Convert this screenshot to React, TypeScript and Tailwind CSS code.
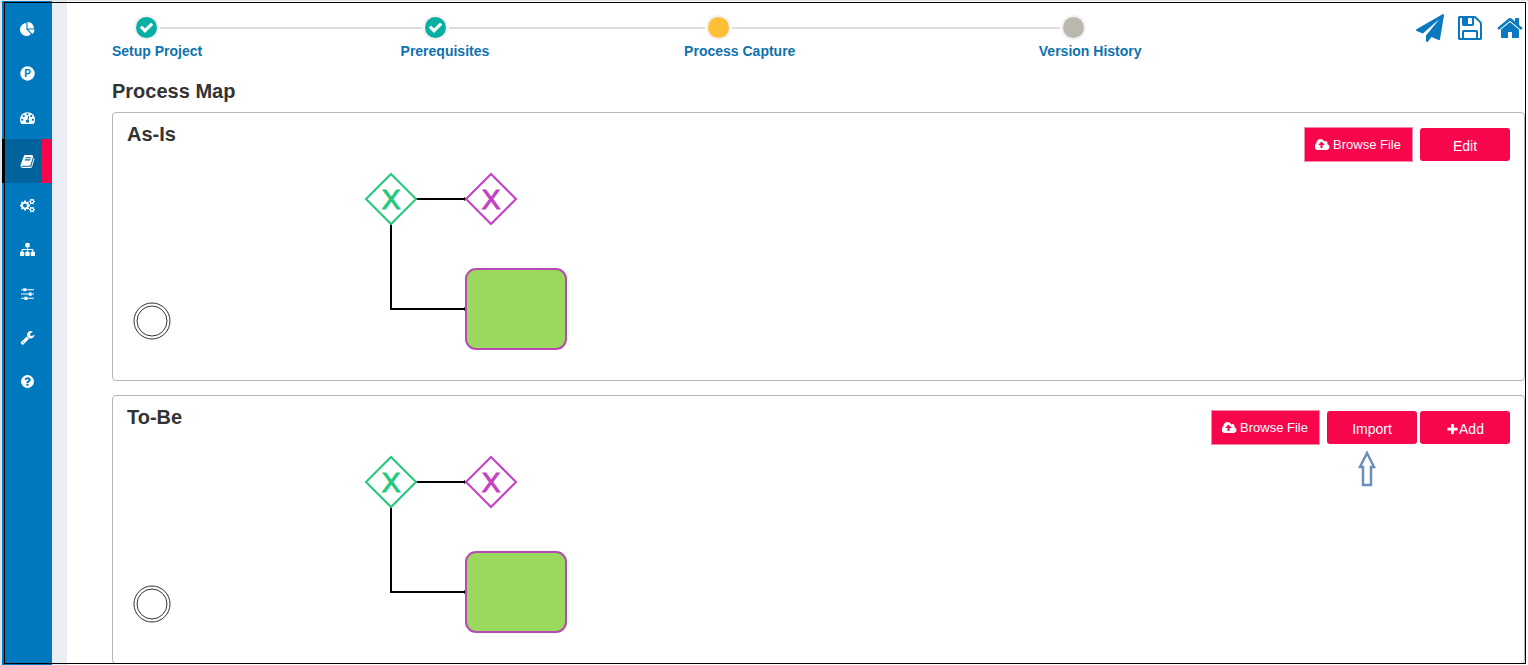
import { clsx } from "clsx";
import type { ReactNode } from "react";

const ICONS = {
  pie: "M768 890l546 546q-106 108-247.5 168t-298.5 60q-209 0-385.5-103t-279.5-279.5-103-385.5 103-385.5 279.5-279.5 385.5-103v762zm187 6h773q0 157-60 298.5t-168 247.5zm709-128h-768v-768q209 0 385.5 103t279.5 279.5 103 385.5z",
  gauge:
    "M384 1152q0-53-37.5-90.5t-90.5-37.5-90.5 37.5-37.5 90.5 37.5 90.5 90.5 37.5 90.5-37.5 37.5-90.5zm192-448q0-53-37.5-90.5t-90.5-37.5-90.5 37.5-37.5 90.5 37.5 90.5 90.5 37.5 90.5-37.5 37.5-90.5zm428 481l101-382q6-26-7.5-48.5t-38.5-29.5-48 6.5-30 39.5l-101 382q-60 5-107 43.5t-63 98.5q-20 77 20 146t117 89 146-20 89-117q16-60-6-117t-72-91zm660-33q0-53-37.5-90.5t-90.5-37.5-90.5 37.5-37.5 90.5 37.5 90.5 90.5 37.5 90.5-37.5 37.5-90.5zm-640-640q0-53-37.5-90.5t-90.5-37.5-90.5 37.5-37.5 90.5 37.5 90.5 90.5 37.5 90.5-37.5 37.5-90.5zm448 192q0-53-37.5-90.5t-90.5-37.5-90.5 37.5-37.5 90.5 37.5 90.5 90.5 37.5 90.5-37.5 37.5-90.5zm320 448q0 261-141 483-19 29-54 29h-1402q-35 0-54-29-141-221-141-483 0-182 71-348t191-286 286-191 348-71 348 71 286 191 191 286 71 348z",
  book: "M1703 478q40 57 18 129l-275 906q-19 64-76.5 107.5t-122.5 43.5h-923q-77 0-148.5-53.5t-99.5-131.5q-24-67-2-127 0-4 3-27t4-37q1-8-3-21.5t-3-19.5q2-11 8-21t16.5-23.5 16.5-23.5q23-38 45-91.5t30-91.5q3-10 .5-30t-.5-28q3-11 17-28t17-23q21-36 42-92t25-90q1-9-2.5-32t.5-28q4-13 22-30.5t22-22.5q19-26 42.5-84.5t27.5-96.5q1-8-3-25.5t-2-26.5q2-8 9-18t18-23 17-21q8-12 16.5-30.5t15-35 16-36 19.5-32 26.5-23.5 36-11.5 47.5 5.5l-1 3q38-9 51-9h761q74 0 114 56t18 130l-274 906q-36 119-71.5 153.5t-128.5 34.5h-869q-27 0-38 15-11 16-1 43 24 70 144 70h923q29 0 56-15.5t35-41.5l300-987q7-22 5-57 38 15 59 43zm-1064 2q-4 13 2 22.5t20 9.5h608q13 0 25.5-9.5t16.5-22.5l21-64q4-13-2-22.5t-20-9.5h-608q-13 0-25.5 9.5t-16.5 22.5zm-83 256q-4 13 2 22.5t20 9.5h608q13 0 25.5-9.5t16.5-22.5l21-64q4-13-2-22.5t-20-9.5h-608q-13 0-25.5 9.5t-16.5 22.5z",
  cogs: "M896 896q0-106-75-181t-181-75-181 75-75 181 75 181 181 75 181-75 75-181zm768 512q0-52-38-90t-90-38-90 38-38 90q0 53 37.5 90.5t90.5 37.5 90.5-37.5 37.5-90.5zm0-1024q0-52-38-90t-90-38-90 38-38 90q0 53 37.5 90.5t90.5 37.5 90.5-37.5 37.5-90.5zm-384 421v185q0 10-7 19.5t-16 10.5l-155 24q-11 35-32 76 34 48 90 115 7 11 7 20 0 12-7 19-23 30-82.5 89.5t-78.5 59.5q-11 0-21-7l-115-90q-37 19-77 31-11 108-23 155-7 24-30 24h-186q-11 0-20-7.5t-10-17.5l-23-153q-34-10-75-31l-118 89q-7 7-20 7-11 0-21-8-144-133-144-160 0-9 7-19 10-14 41-53t47-61q-23-44-35-82l-152-24q-10-1-17-9.5t-7-19.5v-185q0-10 7-19.5t16-10.5l155-24q11-35 32-76-34-48-90-115-7-11-7-20 0-12 7-20 22-30 82-89t79-59q11 0 21 7l115 90q34-18 77-32 11-108 23-154 7-24 30-24h186q11 0 20 7.5t10 17.5l23 153q34 10 75 31l118-89q8-7 20-7 11 0 21 8 144 133 144 160 0 8-7 19-12 16-42 54t-45 60q23 48 34 82l152 23q10 2 17 10.5t7 19.5zm640 533v140q0 16-149 31-12 27-30 52 51 113 51 138 0 4-4 7-122 71-124 71-8 0-46-47t-52-68q-20 2-30 2t-30-2q-14 21-52 68t-46 47q-2 0-124-71-4-3-4-7 0-25 51-138-18-25-30-52-149-15-149-31v-140q0-16 149-31 13-29 30-52-51-113-51-138 0-4 4-7 4-2 35-20t59-34 30-16q8 0 46 46.5t52 67.5q20-2 30-2t30 2q51-71 92-112l6-2q4 0 124 70 4 3 4 7 0 25-51 138 17 23 30 52 149 15 149 31zm0-1024v140q0 16-149 31-12 27-30 52 51 113 51 138 0 4-4 7-122 71-124 71-8 0-46-47t-52-68q-20 2-30 2t-30-2q-14 21-52 68t-46 47q-2 0-124-71-4-3-4-7 0-25 51-138-18-25-30-52-149-15-149-31v-140q0-16 149-31 13-29 30-52-51-113-51-138 0-4 4-7 4-2 35-20t59-34 30-16q8 0 46 46.5t52 67.5q20-2 30-2t30 2q51-71 92-112l6-2q4 0 124 70 4 3 4 7 0 25-51 138 17 23 30 52 149 15 149 31z",
  sitemap:
    "M1792 1248v320q0 40-28 68t-68 28h-320q-40 0-68-28t-28-68v-320q0-40 28-68t68-28h96v-192h-512v192h96q40 0 68 28t28 68v320q0 40-28 68t-68 28h-320q-40 0-68-28t-28-68v-320q0-40 28-68t68-28h96v-192h-512v192h96q40 0 68 28t28 68v320q0 40-28 68t-68 28h-320q-40 0-68-28t-28-68v-320q0-40 28-68t68-28h96v-192q0-52 38-90t90-38h512v-192h-96q-40 0-68-28t-28-68v-320q0-40 28-68t68-28h320q40 0 68 28t28 68v320q0 40-28 68t-68 28h-96v192h512q52 0 90 38t38 90v192h96q40 0 68 28t28 68z",
  sliders:
    "M480 1408v128h-352v-128h352zm352-128q26 0 45 19t19 45v256q0 26-19 45t-45 19h-256q-26 0-45-19t-19-45v-256q0-26 19-45t45-19h256zm160-384v128h-864v-128h864zm-640-512v128h-224v-128h224zm1312 1024v128h-736v-128h736zm-960-1152q26 0 45 19t19 45v256q0 26-19 45t-45 19h-256q-26 0-45-19t-19-45v-256q0-26 19-45t45-19h256zm640 512q26 0 45 19t19 45v256q0 26-19 45t-45 19h-256q-26 0-45-19t-19-45v-256q0-26 19-45t45-19h256zm320 128v128h-224v-128h224zm0-512v128h-864v-128h864z",
  wrench:
    "M448 1472q0-26-19-45t-45-19-45 19-19 45 19 45 45 19 45-19 19-45zm644-420l-682 682q-37 37-90 37-52 0-91-37l-106-108q-38-36-38-90 0-53 38-91l681-681q39 98 114.5 173.5t173.5 114.5zm634-435q0 39-23 106-47 134-164.5 217.5t-258.5 83.5q-185 0-316.5-131.5t-131.5-316.5 131.5-316.5 316.5-131.5q58 0 121.5 16.5t107.5 46.5q16 11 16 28t-16 28l-293 169v224l193 107q5-3 79-48.5t135.5-81 70.5-35.5q15 0 23.5 10t8.5 25z",
  help: "M1024 1376v-192q0-14-9-23t-23-9h-192q-14 0-23 9t-9 23v192q0 14 9 23t23 9h192q14 0 23-9t9-23zm256-672q0-88-55.5-163t-138.5-116-170-41q-243 0-371 213-15 24 8 42l132 100q7 6 19 6 16 0 25-12 53-68 86-92 34-24 86-24 48 0 85.5 26t37.5 59q0 38-20 61t-68 45q-63 28-115.5 86.5t-52.5 125.5v36q0 14 9 23t23 9h192q14 0 23-9t9-23q0-19 21.5-49.5t54.5-49.5q32-18 49-28.5t46-35 44.5-48 28-60.5 12.5-81zm384 192q0 209-103 385.5t-279.5 279.5-385.5 103-385.5-103-279.5-279.5-103-385.5 103-385.5 279.5-279.5 385.5-103 385.5 103 279.5 279.5 103 385.5z",
  plane:
    "M1764 11q33 24 27 64l-256 1536q-5 29-32 45-14 8-31 8-11 0-24-5l-453-185-242 295q-18 23-49 23-13 0-22-4-19-7-30.5-23.5t-11.5-36.5v-349l864-1059-1069 925-395-162q-37-14-40-55-2-40 32-59l1664-960q15-9 32-9 20 0 36 11z",
  save: "M512 1536h768v-384h-768v384zm896 0h128v-896q0-14-10-38.5t-20-34.5l-281-281q-10-10-34-20t-39-10v416q0 40-28 68t-68 28h-576q-40 0-68-28t-28-68v-416h-128v1280h128v-416q0-40 28-68t68-28h832q40 0 68 28t28 68v416zm-384-928v-320q0-13-9.5-22.5t-22.5-9.5h-192q-13 0-22.5 9.5t-9.5 22.5v320q0 13 9.5 22.5t22.5 9.5h192q13 0 22.5-9.5t9.5-22.5zm640 32v928q0 40-28 68t-68 28h-1344q-40 0-68-28t-28-68v-1344q0-40 28-68t68-28h928q40 0 88 20t76 48l280 280q28 28 48 76t20 88z",
  home: "M1472 992v480q0 26-19 45t-45 19h-384v-384h-256v384h-384q-26 0-45-19t-19-45v-480q0-1 .5-3t.5-3l575-474 575 474q1 2 1 6zm223-69l-62 74q-8 9-21 11h-3q-13 0-21-7l-692-577-692 577q-12 8-24 7-13-2-21-11l-62-74q-8-10-7-23.5t11-21.5l719-599q32-26 76-26t76 26l244 204v-195q0-14 9-23t23-9h192q14 0 23 9t9 23v408l219 182q10 8 11 21.5t-7 23.5z",
  check:
    "M1671 566q0 40-28 68l-724 724-136 136q-28 28-68 28t-68-28l-136-136-362-362q-28-28-28-68t28-68l136-136q28-28 68-28t68 28l294 295 656-657q28-28 68-28t68 28l136 136q28 28 28 68z",
  plus: "M1600 736v192q0 40-28 68t-68 28h-416v416q0 40-28 68t-68 28h-192q-40 0-68-28t-28-68v-416h-416q-40 0-68-28t-28-68v-192q0-40 28-68t68-28h416v-416q0-40 28-68t68-28h192q40 0 68 28t28 68v416h416q40 0 68 28t28 68z",
  upload:
    "M1216 864q0-14-9-23l-352-352q-9-9-23-9t-23 9l-351 351q-10 12-10 24 0 14 9 23t23 9h224v352q0 13 9.5 22.5t22.5 9.5h192q13 0 22.5-9.5t9.5-22.5v-352h224q13 0 22.5-9.5t9.5-22.5zm640 288q0 159-112.5 271.5t-271.5 112.5h-1088q-185 0-316.5-131.5t-131.5-316.5q0-130 70-240t188-165q-2-30-2-43 0-212 150-362t362-150q156 0 285.5 87t188.5 231q71-62 166-62 106 0 181 75t75 181q0 76-41 138 130 31 213.5 135.5t83.5 238.5z",
};

type IconName = keyof typeof ICONS;

function Icon({ name, className }: { name: IconName; className?: string }) {
  const wide = name === "upload" || name === "cogs";
  return (
    <svg
      viewBox={wide ? "0 0 1920 1792" : "0 0 1792 1792"}
      fill="currentColor"
      className={clsx("shrink-0", className)}
      aria-hidden="true"
    >
      <path d={ICONS[name]} />
    </svg>
  );
}

function ProjectIcon() {
  return (
    <svg viewBox="0 0 15 15" className="size-[15px] shrink-0" aria-hidden="true">
      <circle cx="7.5" cy="7.5" r="7.2" fill="#fff" />
      <text x="7.7" y="11" textAnchor="middle" fontSize="10" fontWeight="700" fill="#0078bd">
        P
      </text>
    </svg>
  );
}

const NAV: { label: string; icon: IconName | null; active?: boolean }[] = [
  { label: "Dashboard", icon: "pie" },
  { label: "Projects", icon: null },
  { label: "Performance", icon: "gauge" },
  { label: "Process library", icon: "book", active: true },
  { label: "Configuration", icon: "cogs" },
  { label: "Organisation", icon: "sitemap" },
  { label: "Parameters", icon: "sliders" },
  { label: "Tools", icon: "wrench" },
  { label: "Help", icon: "help" },
];

function Sidebar() {
  return (
    <nav className="w-[50px] shrink-0 bg-[#0078bd] pt-[6px]">
      <ul>
        {NAV.map((item) => (
          <li key={item.label}>
            <a
              href="#"
              aria-label={item.label}
              aria-current={item.active ? "page" : undefined}
              className={clsx(
                "relative flex h-11 items-center justify-center text-white",
                item.active && "bg-[#00639c]",
              )}
            >
              {item.active && (
                <>
                  <span className="absolute inset-y-0 left-0 w-[2px] bg-black" />
                  <span className="absolute inset-y-0 right-0 w-[10px] bg-[#f7064c]" />
                </>
              )}
              {item.icon ? <Icon name={item.icon} className="size-[15px]" /> : <ProjectIcon />}
            </a>
          </li>
        ))}
      </ul>
    </nav>
  );
}

type StepState = "done" | "current" | "pending";

const STEPS: { label: string; state: StepState }[] = [
  { label: "Setup Project", state: "done" },
  { label: "Prerequisites", state: "done" },
  { label: "Process Capture", state: "current" },
  { label: "Version History", state: "pending" },
];

function Stepper() {
  return (
    <ol className="mr-[276px] grid flex-1 grid-cols-[288fr_283fr_354fr_101fr]">
      {STEPS.map((step, i) => (
        <li key={step.label} className="min-w-0">
          <div className="flex items-center">
            <span className={clsx("h-[2px] w-[21px]", i > 0 && "bg-[#dddddd]")} />
            <span className="flex size-[27px] items-center justify-center rounded-full border border-white bg-[#f3f1f3]">
              <span
                className={clsx(
                  "flex size-[21px] items-center justify-center rounded-full text-white",
                  step.state === "done" && "bg-[#07b0a2]",
                  step.state === "current" && "bg-[#ffc038]",
                  step.state === "pending" && "bg-[#bab7af]",
                )}
              >
                {step.state === "done" && <Icon name="check" className="size-[15px]" />}
              </span>
            </span>
            <span className={clsx("h-[2px] flex-1", i < STEPS.length - 1 && "bg-[#dddddd]")} />
          </div>
          <a href="#" className="block text-[14px] leading-[20px] font-bold whitespace-nowrap text-[#0f72ae]">
            {step.label}
          </a>
        </li>
      ))}
    </ol>
  );
}

function Gateway({ x, y, color }: { x: number; y: number; color: string }) {
  return (
    <g transform={`translate(${x} ${y})`}>
      <path d="M0 -25L25 0L0 25L-25 0Z" fill="#fff" stroke={color} strokeWidth="2" />
      <text x="0" y="10" textAnchor="middle" fontSize="28" fill={color} stroke={color} strokeWidth="1">
        X
      </text>
    </g>
  );
}

function ProcessDiagram() {
  return (
    <svg width="460" height="218" viewBox="0 0 460 218" className="block" role="img" aria-label="Process diagram">
      <g fill="#fff" stroke="#333" strokeWidth="1">
        <circle cx="25" cy="159" r="18" />
        <circle cx="25" cy="159" r="15" />
      </g>
      <path d="M289 37H339M264 62V147H339" fill="none" stroke="#000" strokeWidth="2" />
      <path d="M337 35L340 37L337 39ZM337 145L340 147L337 149Z" fill="#000" />
      <Gateway x={264} y={37} color="#25c87c" />
      <Gateway x={364} y={37} color="#c43fc4" />
      <rect x="339" y="107" width="100" height="80" rx="10" fill="#9ad85e" stroke="#b84ab4" strokeWidth="2" />
    </svg>
  );
}

function BrowseButton() {
  return (
    <button
      type="button"
      className="mr-[7px] flex h-[35px] w-[109px] items-center justify-center gap-[3px] border border-[#f58bab] bg-[#f7064c] pr-px text-[13px] text-white"
    >
      <Icon name="upload" className="h-[14px] w-[15px]" />
      Browse File
    </button>
  );
}

function ActionButton({ children }: { children: ReactNode }) {
  return (
    <button
      type="button"
      className="flex h-[33px] w-[90px] items-center justify-center rounded-[3px] bg-[#f7064c] pt-[3px] text-[14px] text-white"
    >
      {children}
    </button>
  );
}

function ImportPointer() {
  return (
    <svg
      width="18"
      height="38"
      viewBox="0 0 18 38"
      className="absolute top-full left-[31px] mt-[5px]"
      aria-hidden="true"
    >
      <path d="M9 4L16 18H13V36H5V18H2Z" fill="#fff" stroke="#6b90bb" strokeWidth="2.5" />
    </svg>
  );
}

function MapCard({ title, actions }: { title: string; actions: ReactNode }) {
  return (
    <section className="rounded-[4px] border border-[#b5b5b5] bg-white pt-2 pr-[14px] pl-[14px]">
      <div className="flex items-start justify-between">
        <h2 className="text-[20px] leading-[26px] font-bold text-[#333]">{title}</h2>
        <div className="mt-[6px] flex items-center">{actions}</div>
      </div>
      <ProcessDiagram />
    </section>
  );
}

export default function App() {
  return (
    <div className="relative flex min-h-screen bg-[#dfe4ea] pt-px pl-[2px] font-['Liberation_Sans',Arial,sans-serif]">
      <Sidebar />
      <div className="w-[15px] shrink-0 bg-[#eaedf3]" />

      <main className="min-w-0 flex-1 bg-white pt-[13px] pr-[3px] pl-[45px]">
        <header className="flex items-start">
          <Stepper />
          <div className="mr-px flex gap-3 text-[#0a78be]">
            <button type="button" aria-label="Submit">
              <Icon name="plane" className="size-7" />
            </button>
            <button type="button" aria-label="Save">
              <Icon name="save" className="size-7" />
            </button>
            <a href="#" aria-label="Home">
              <Icon name="home" className="size-7" />
            </a>
          </div>
        </header>

        <h1 className="mt-[18px] mb-[9px] text-[20px] leading-6 font-bold text-[#333]">Process Map</h1>

        <div className="flex flex-col gap-[14px]">
          <MapCard
            title="As-Is"
            actions={
              <>
                <BrowseButton />
                <ActionButton>Edit</ActionButton>
              </>
            }
          />
          <MapCard
            title="To-Be"
            actions={
              <>
                <BrowseButton />
                <div className="relative mr-[3px]">
                  <ActionButton>Import</ActionButton>
                  <ImportPointer />
                </div>
                <ActionButton>
                  <Icon name="plus" className="size-[13px]" />
                  Add
                </ActionButton>
              </>
            }
          />
        </div>
      </main>

      {/* thin frame drawn over the whole page */}
      <div className="pointer-events-none absolute top-[2px] right-[2px] bottom-px left-1 border border-black" />
    </div>
  );
}
